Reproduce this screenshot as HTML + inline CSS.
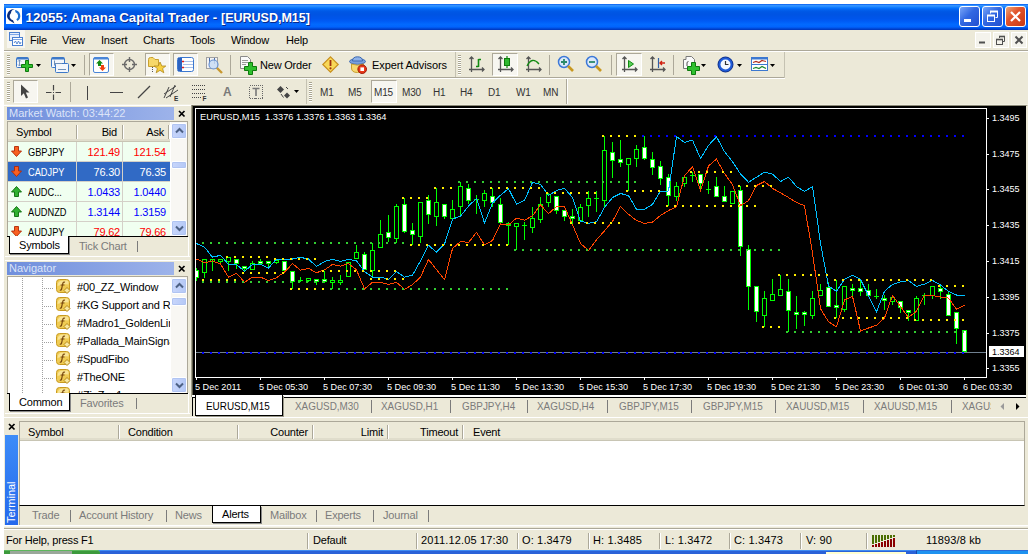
<!DOCTYPE html>
<html><head><meta charset="utf-8"><title>12055: Amana Capital Trader - [EURUSD,M15]</title>
<style>
*{box-sizing:border-box;margin:0;padding:0}
html,body{width:1032px;height:554px;overflow:hidden;background:#fff}
body{position:relative;font-family:"Liberation Sans",sans-serif;font-size:11px;color:#000;line-height:1}
.a,.t,svg{position:absolute}
.t{white-space:nowrap;line-height:13px;height:13px;font-size:11px;letter-spacing:-0.2px}
.u{display:inline-block;transform:scaleX(.84);transform-origin:0 50%;letter-spacing:0}
svg{overflow:visible}
#bg{left:4px;top:4px;width:1024px;height:546px;background:#ECE9D8}
#tb{left:4px;top:4px;width:1024px;height:26px;background:linear-gradient(#0058EE 0,#3593FF 5%,#288EFF 9%,#127DFF 13%,#036FFC 17%,#0262EE 22%,#0057E5 30%,#0054E3 40%,#0055EB 56%,#005BF5 66%,#026AFE 78%,#0164FD 88%,#0050E2 93%,#003DC6 97%,#0038BE 100%)}
#ttl{letter-spacing:0.08px;left:25.5px;top:10px;font:bold 13.3px "Liberation Sans",sans-serif;color:#fff;height:16px;line-height:16px;text-shadow:1px 1px 0 #0A2A8A}
.cb{position:absolute;top:6px;width:21px;height:21px;border:1px solid #fff;border-radius:3px;background:linear-gradient(135deg,#7AA6F8 0,#3268E2 45%,#2250D0 100%)}
.cb.x{background:linear-gradient(135deg,#ECA878 0,#E2542C 40%,#C83814 100%)}
.hl{position:absolute;height:1px}
.vl{position:absolute;width:1px}
.grip{position:absolute;width:3px;background:repeating-linear-gradient(#A9A58F 0,#A9A58F 1px,#fff 1px,#fff 2px)}
.pr{position:absolute;border:1px solid;border-color:#ACA899 #fff #fff #ACA899;background:#F7F6F0}
.g{color:#7B7B7B}
</style></head><body>
<div id="bg" class="a"></div>
<!-- title bar -->
<div id="tb" class="a"></div>
<svg style="left:6px;top:8px" width="16" height="16" viewBox="0 0 16 16"><rect width="16" height="16" fill="#fff"/><path d="M9 1.5A6.3 6.3 0 0 0 3.5 12.5L8.5 15.5L7 12.2A4.2 4.2 0 0 1 5 5A3.5 3.5 0 0 1 9 1.5Z" fill="#0A2A78"/><path d="M9 2A6 6 0 0 1 11.5 13L10.3 11.3A4 4 0 0 0 9.5 4.2Z" fill="#1E6FD0"/></svg>
<div id="ttl" class="t">12055: Amana Capital Trader - <span class="u" style="transform:scaleX(.94)">[EURUSD,M15]</span></div>
<div class="cb" style="left:959px"><div class="a" style="left:4px;top:12px;width:7px;height:3px;background:#fff"></div></div>
<div class="cb" style="left:982px"><svg style="left:0;top:0" width="19" height="19"><path d="M7.5 6.5V4.5H14.5V10.500H12.500" fill="none" stroke="#fff" stroke-width="1"/><path d="M7 4.500H15" stroke="#fff" stroke-width="2"/><rect x="4.500" y="8.500" width="7" height="6" fill="none" stroke="#fff"/><path d="M4 8.500H12" stroke="#fff" stroke-width="2"/></svg></div>
<div class="cb x" style="left:1005px"><svg style="left:0;top:0" width="19" height="19"><path d="M5 5L14 14M14 5L5 14" stroke="#fff" stroke-width="2.2"/></svg></div>
<!-- menu -->
<svg style="left:8px;top:31px" width="16" height="16" viewBox="0 0 16 16"><rect x="-1" y="-1" width="18" height="18" fill="#F7F6F0"/><rect x="1.500" y="1.500" width="10" height="8" fill="#E8F0FC" stroke="#4A7FD0"/><rect x="4.500" y="6.500" width="10" height="8" fill="#fff" stroke="#4A7FD0"/><path d="M2 3.500H11M5 8.500H14" stroke="#7FA8E8" stroke-width="1"/><path d="M6 12L7.500 10L9 13L10.500 10L12 13L13 11" fill="none" stroke="#4A7FD0" stroke-width="0.9"/></svg>
<div class="t" style="left:30px;top:34px">File</div>
<div class="t" style="left:62px;top:34px">View</div>
<div class="t" style="left:101px;top:34px">Insert</div>
<div class="t" style="left:143px;top:34px">Charts</div>
<div class="t" style="left:190px;top:34px">Tools</div>
<div class="t" style="left:231px;top:34px">Window</div>
<div class="t" style="left:286px;top:34px">Help</div>
<svg style="left:975px;top:32px" width="53" height="16"><g fill="#F4F3EC" stroke="#fff"><rect x="0.500" y="0.500" width="15" height="15"/><rect x="18.500" y="0.500" width="15" height="15"/><rect x="36.500" y="0.500" width="15" height="15"/></g><path d="M4 10.500H10" stroke="#505050" stroke-width="2"/><path d="M24.500 6V4.500H29.500V9.500H28" fill="none" stroke="#505050"/><path d="M24 4.500H30" stroke="#505050" stroke-width="1.600"/><rect x="21.500" y="7.500" width="6" height="5" fill="none" stroke="#505050"/><path d="M21 7.500H28" stroke="#505050" stroke-width="1.600"/><path d="M40.500 4.500L47.500 11.500M47.500 4.500L40.500 11.500" stroke="#505050" stroke-width="2"/></svg>
<div class="hl" style="left:4px;top:50px;width:1024px;background:#ACA899"></div>
<div class="hl" style="left:4px;top:51px;width:1024px;background:#fff"></div>
<!-- toolbar 1 -->
<div class="hl" style="left:4px;top:77px;width:781px;background:#ACA899"></div>
<div class="hl" style="left:4px;top:78px;width:781px;background:#fff"></div>
<div class="vl" style="left:455px;top:52px;height:25px;background:#C5C2B2"></div>
<div class="vl" style="left:784px;top:52px;height:26px;background:#C5C2B2"></div>
<div class="grip" style="left:7px;top:55px;height:20px"></div>
<div class="grip" style="left:458px;top:55px;height:20px"></div>
<!-- new chart -->
<svg style="left:16px;top:56px" width="18" height="18"><rect x="0.500" y="1.500" width="12" height="10" rx="1" fill="#F2F6FC" stroke="#3C78C8"/><path d="M1 2.500H12" stroke="#3C78C8" stroke-width="2"/><path d="M3.500 4V10M2 5.500L3.500 4L5 5.500M2 8.500L3.500 10L5 8.500" fill="none" stroke="#6E8FB8" stroke-width="0.9"/><path d="M9.500 4.500H12.500V8.500H16.500V11.500H12.500V15.500H9.500V11.500H5.500V8.500H9.500Z" fill="#2FC02F" stroke="#0E7A0E"/></svg>
<svg style="left:36px;top:64px" width="6" height="4"><path d="M0 0H5L2.500 3Z" fill="#000"/></svg>
<!-- profiles -->
<svg style="left:51px;top:56px" width="18" height="18"><rect x="0.500" y="1.500" width="13" height="10" rx="1" fill="#F2F6FC" stroke="#3C78C8"/><path d="M1 2.500H13" stroke="#3C78C8" stroke-width="2"/><rect x="4.500" y="7.500" width="13" height="9" rx="1" fill="#F2F6FC" stroke="#3C78C8"/><path d="M3.500 4.500V9.500M3 7.500H11" stroke="#6E8FB8" fill="none"/><path d="M7 13.500H15" stroke="#6E8FB8"/></svg>
<svg style="left:71px;top:64px" width="6" height="4"><path d="M0 0H5L2.500 3Z" fill="#000"/></svg>
<div class="vl" style="left:84px;top:55px;height:20px;background:#ACA899"></div>
<!-- market watch (pressed) -->
<div class="pr" style="left:89px;top:53px;width:25px;height:23px"></div>
<svg style="left:93px;top:57px" width="17" height="17"><rect x="0.500" y="0.500" width="15" height="15" rx="1.500" fill="#fff" stroke="#4A86D8"/><path d="M1 1.500H15" stroke="#4A86D8" stroke-width="2"/><path d="M6.500 3L3 6.500H5V9H8V6.500H10Z" fill="#128A12"/><path d="M9.500 14L6 10.500H8V8H11V10.500H13Z" fill="#F04010"/></svg>
<!-- crosshair circle -->
<svg style="left:121px;top:56px" width="17" height="17"><circle cx="8.500" cy="8.500" r="5" fill="none" stroke="#6A6A6A" stroke-width="1.400"/><path d="M8.500 1V6M8.500 11V16M1 8.500H6M11 8.500H16" stroke="#6A6A6A" stroke-width="1.400"/></svg>
<!-- navigator folder star (pressed) -->
<div class="pr" style="left:145px;top:53px;width:25px;height:23px"></div>
<svg style="left:148px;top:56px" width="19" height="18"><path d="M0.500 3.500Q0.500 1.500 2.500 1.500H5L7 3.500H10.500V10.500H0.500Z" fill="#F6D86A" stroke="#C8A030"/><path d="M4.500 11V17" stroke="#555" stroke-dasharray="1 1"/><path d="M12 6L13.800 10H17.800L14.600 12.600L15.800 16.800L12 14.300L8.200 16.800L9.400 12.600L6.200 10H10.200Z" fill="#F8D040" stroke="#B08818" stroke-width="0.800"/></svg>
<!-- terminal (pressed) -->
<div class="pr" style="left:173px;top:53px;width:25px;height:23px"></div>
<svg style="left:177px;top:57px" width="17" height="16"><rect x="0.500" y="0.500" width="16" height="14" rx="2" fill="#fff" stroke="#3C78D0"/><rect x="1" y="1" width="4" height="13" fill="#2C62C0"/><path d="M6 4.500H16M6 7.500H16M6 10.500H16" stroke="#A8C0E8"/><path d="M5 4.500H7M5 10.500H7" stroke="#E02020" stroke-width="1.400"/></svg>
<!-- strategy tester magnifier -->
<svg style="left:205px;top:56px" width="19" height="19"><rect x="1.500" y="1.500" width="11" height="11" fill="#F4F4F4" stroke="#A0A0A0"/><path d="M4.500 2V8M9.500 2V8" stroke="#4A6EA8"/><circle cx="8.500" cy="8.500" r="4.500" fill="#C8DCF4" fill-opacity="0.850" stroke="#6A92D0" stroke-width="1.200"/><path d="M12 12L17 17" stroke="#C89830" stroke-width="2.400"/></svg>
<div class="vl" style="left:230px;top:55px;height:20px;background:#ACA899"></div>
<!-- new order -->
<svg style="left:240px;top:56px" width="18" height="19"><path d="M0.500 0.500H7.500L10.500 3.500V12.500H0.500Z" fill="#FAFAFA" stroke="#8A8A8A"/><path d="M2 4.500H8M2 6.500H8M2 8.500H6" stroke="#9A9A9A"/><path d="M8.500 6.500H12.500V10.500H16.500V14.500H12.500V18.500H8.500V14.500H4.500V10.500H8.500Z" fill="#2FC02F" stroke="#0E7A0E"/></svg>
<div class="t" style="left:260px;top:59px;letter-spacing:-0.2px">New Order</div>
<!-- warning diamond -->
<svg style="left:322px;top:56px" width="17" height="17"><path d="M8.500 0.800L16.200 8.500L8.500 16.200L0.800 8.500Z" fill="#F8D858" stroke="#C89020" stroke-width="1.200"/><path d="M8.500 4V10" stroke="#A03010" stroke-width="1.800"/><circle cx="8.500" cy="12.300" r="1.100" fill="#A03010"/></svg>
<!-- expert advisors icon -->
<svg style="left:349px;top:56px" width="19" height="19"><ellipse cx="8.500" cy="5.500" rx="8" ry="2.800" fill="#7AA0DC" stroke="#3C68B0"/><path d="M3.500 5Q3.500 0.800 8.500 0.800Q13.500 0.800 13.500 5Z" fill="#8FB2E8" stroke="#3C68B0"/><path d="M2.500 8Q8.500 10.500 14.500 8V12Q14.500 16.500 8.500 16.500Q2.500 16.500 2.500 12Z" fill="#F6D870" stroke="#C8A030"/><circle cx="13.200" cy="13.200" r="4.300" fill="#E83818" stroke="#A01808"/><rect x="11.400" y="11.400" width="3.600" height="3.600" fill="#fff"/></svg>
<div class="t" style="left:372px;top:59px;letter-spacing:-0.1px">Expert Advisors</div>
<!-- toolbar 1 right segment -->
<svg style="left:468px;top:56px" width="17" height="17"><path d="M3.500 1V16M1 13.500H16M1.500 3L3.500 1L5.500 3M14 11.500L16 13.500L14 15.500" fill="none" stroke="#555" stroke-width="1.300"/><path d="M10.500 3V11M10.500 3.500H13M8 10.500H10.500" fill="none" stroke="#128A12" stroke-width="1.600"/></svg>
<div class="pr" style="left:492px;top:53px;width:26px;height:23px"></div>
<svg style="left:497px;top:56px" width="17" height="17"><path d="M3.500 1V16M1 13.500H16M1.500 3L3.500 1L5.500 3M14 11.500L16 13.500L14 15.500" fill="none" stroke="#555" stroke-width="1.300"/><path d="M10 0V12" stroke="#128A12" stroke-width="1.200"/><rect x="7.500" y="2.500" width="5" height="7" fill="#2FB82F" stroke="#0E7A0E"/></svg>
<svg style="left:525px;top:56px" width="17" height="17"><path d="M3.500 1V16M1 13.500H16M1.500 3L3.500 1L5.500 3M14 11.500L16 13.500L14 15.500" fill="none" stroke="#555" stroke-width="1.300"/><path d="M2 10Q7 0 14 8" fill="none" stroke="#128A12" stroke-width="1.300"/></svg>
<div class="vl" style="left:549px;top:55px;height:20px;background:#ACA899"></div>
<svg style="left:557px;top:55px" width="19" height="19"><circle cx="7" cy="7" r="5.500" fill="#DCE8FA" stroke="#3C78D8" stroke-width="1.500"/><path d="M4 7H10M7 4V10" stroke="#2A8A6A" stroke-width="1.800"/><path d="M11 11L16 16" stroke="#C89820" stroke-width="2.600"/></svg>
<svg style="left:585px;top:55px" width="19" height="19"><circle cx="7" cy="7" r="5.500" fill="#DCE8FA" stroke="#3C78D8" stroke-width="1.500"/><path d="M4 7H10" stroke="#2A8A6A" stroke-width="1.800"/><path d="M11 11L16 16" stroke="#C89820" stroke-width="2.600"/></svg>
<div class="vl" style="left:611px;top:55px;height:20px;background:#ACA899"></div>
<div class="pr" style="left:616px;top:53px;width:26px;height:23px"></div>
<svg style="left:621px;top:56px" width="17" height="17"><path d="M3.500 1V16M1 13.500H16M1.500 3L3.500 1L5.500 3M14 11.500L16 13.500L14 15.500" fill="none" stroke="#555" stroke-width="1.300"/><path d="M7.500 4.500V11.500L12.500 8Z" fill="#5AD05A" stroke="#128A12"/></svg>
<svg style="left:649px;top:56px" width="17" height="17"><path d="M3.500 1V16M1 13.500H16M1.500 3L3.500 1L5.500 3M14 11.500L16 13.500L14 15.500" fill="none" stroke="#555" stroke-width="1.300"/><path d="M9.500 2V12" stroke="#3060A8" stroke-width="1.200"/><path d="M16 7H11M13 5L11 7L13 9" fill="none" stroke="#D02010" stroke-width="1.400"/></svg>
<div class="vl" style="left:673px;top:55px;height:20px;background:#ACA899"></div>
<svg style="left:683px;top:56px" width="18" height="19"><path d="M0.500 3.500H3V0.500H8.500L11.500 3.500V12.500H0.500Z" fill="#FAFAFA" stroke="#7A7A7A"/><path d="M5.500 5.500Q4 5.500 4 7V10" fill="none" stroke="#555"/><path d="M8.500 6.500H12.500V10.500H16.500V14.500H12.500V18.500H8.500V14.500H4.500V10.500H8.500Z" fill="#2FC02F" stroke="#0E7A0E"/></svg>
<svg style="left:701px;top:64px" width="6" height="4"><path d="M0 0H5L2.500 3Z" fill="#000"/></svg>
<svg style="left:717px;top:56px" width="17" height="17"><circle cx="8.500" cy="8.500" r="7.500" fill="#1E5AD8" stroke="#0A2C88"/><circle cx="8.500" cy="8.500" r="5" fill="#F4F8FF"/><path d="M8.500 5V8.500H11.500" fill="none" stroke="#333" stroke-width="1.200"/></svg>
<svg style="left:737px;top:64px" width="6" height="4"><path d="M0 0H5L2.500 3Z" fill="#000"/></svg>
<svg style="left:751px;top:57px" width="18" height="15"><rect x="0.500" y="0.500" width="16" height="13" fill="#fff" stroke="#3C78D0"/><path d="M1 1.500H16" stroke="#3C78D0" stroke-width="2"/><path d="M1 7.500H16" stroke="#3C78D0"/><path d="M2 5.500L5 4.500L8 5.500L11 3.500L15 4.500" fill="none" stroke="#B03020" stroke-width="1.200"/><path d="M2 11.500L5 10.500L8 11.500L11 9.500L15 11.500" fill="none" stroke="#208A30" stroke-width="1.200"/></svg>
<svg style="left:770px;top:64px" width="6" height="4"><path d="M0 0H5L2.500 3Z" fill="#000"/></svg>
<!-- toolbar 2 -->
<div class="hl" style="left:4px;top:104px;width:1024px;background:#F1EFE2"></div>
<div class="hl" style="left:4px;top:105px;width:187px;background:#fff"></div>
<div class="vl" style="left:306px;top:79px;height:25px;background:#C5C2B2"></div>
<div class="vl" style="left:566px;top:79px;height:25px;background:#ACA899"></div>
<div class="vl" style="left:567px;top:79px;height:25px;background:#fff"></div>
<div class="grip" style="left:7px;top:82px;height:20px"></div>
<div class="grip" style="left:309px;top:82px;height:20px"></div>
<div class="pr" style="left:13px;top:80px;width:25px;height:23px"></div>
<svg style="left:20px;top:84px" width="11" height="16"><path d="M1 0.500V12L3.800 9.300L6 14.500L8 13.600L5.800 8.600H9.500Z" fill="#444"/></svg>
<svg style="left:45px;top:84px" width="17" height="17"><path d="M8.500 1V6.500M8.500 10.500V16M1 8.500H6.500M10.500 8.500H16" stroke="#444" stroke-width="1.200"/><rect x="8" y="8" width="1" height="1" fill="#444"/></svg>
<div class="vl" style="left:70px;top:82px;height:20px;background:#ACA899"></div>
<div class="vl" style="left:87px;top:86px;height:14px;background:#444"></div>
<div class="hl" style="left:110px;top:92px;width:13px;background:#444"></div>
<svg style="left:137px;top:85px" width="14" height="14"><path d="M1 13L13 1" stroke="#444" stroke-width="1.200"/></svg>
<svg style="left:163px;top:84px" width="18" height="18"><path d="M1 10L13 2M3 14L15 6M1 14L6 3M7 13L12 1" fill="none" stroke="#444" stroke-width="1"/><text x="11" y="17" font-family="Liberation Sans,sans-serif" font-size="6.500" font-weight="bold" fill="#333">E</text></svg>
<svg style="left:192px;top:84px" width="18" height="18"><path d="M0 1.500H14M0 5.500H14M0 9.500H14M0 13.500H9" stroke="#444" stroke-dasharray="1 1"/><text x="10.500" y="17" font-family="Liberation Sans,sans-serif" font-size="6.500" font-weight="bold" fill="#333">F</text></svg>
<div class="t" style="left:223px;top:86px;font-size:12px;font-weight:bold;color:#7A7A7A">A</div>
<svg style="left:249px;top:84px" width="15" height="16"><rect x="0.500" y="1.500" width="13" height="13" fill="none" stroke="#666" stroke-dasharray="1 1" shape-rendering="crispEdges"/><path d="M3.500 4.500H10.500M7 4.500V12" stroke="#777" stroke-width="1.600"/></svg>
<svg style="left:277px;top:86px" width="14" height="13"><path d="M3.500 0L7 3.500L3.500 7L0 3.500Z" fill="#444"/><path d="M10 6.500L13 9.500L10 12.500L7 9.500Z" fill="#444"/><path d="M4 8L6.500 11.500M9 1L11 3" stroke="#444"/></svg>
<svg style="left:294px;top:90px" width="6" height="4"><path d="M0 0H5L2.500 3Z" fill="#000"/></svg>
<div class="pr" style="left:371px;top:80px;width:26px;height:23px"></div>
<div class="t" style="left:320px;top:86px;font-size:10px;color:#333">M1</div>
<div class="t" style="left:348px;top:86px;font-size:10px;color:#333">M5</div>
<div class="t" style="left:374px;top:86px;font-size:10px;color:#333">M15</div>
<div class="t" style="left:402px;top:86px;font-size:10px;color:#333">M30</div>
<div class="t" style="left:433px;top:86px;font-size:10px;color:#333">H1</div>
<div class="t" style="left:460px;top:86px;font-size:10px;color:#333">H4</div>
<div class="t" style="left:488px;top:86px;font-size:10px;color:#333">D1</div>
<div class="t" style="left:516px;top:86px;font-size:10px;color:#333">W1</div>
<div class="t" style="left:543px;top:86px;font-size:10px;color:#333">MN</div>
<style>
.ptl{position:absolute;left:7px;width:167px;height:13px;background:linear-gradient(90deg,#6F8EDC,#9DB3EA)}
.ptl span{position:absolute;left:2px;top:0;line-height:13px;font-size:11px;color:#DCE4F8;white-space:nowrap}
.mwr{position:absolute;left:8px;width:162px;height:20px;background:#F0FFF0;border-bottom:1px solid #D4D0C8}
.mwr .t{top:4px}
.r{text-align:right}
.red{color:#FF0000}.blu{color:#0000FF}
.sbtn{position:absolute;width:16px;border:1px solid #fff;border-radius:2px;background:linear-gradient(90deg,#C8D6FB,#B4C8F6);box-shadow:inset 0 0 0 1px #B0C4F2}
.nv{position:absolute;left:77px;font-size:11px;letter-spacing:-0.15px;line-height:13px;white-space:nowrap}
</style>
<!-- Market Watch -->
<div class="ptl" style="top:107px"><span>Market Watch: 03:44:22</span></div>
<svg style="left:178px;top:110px" width="8" height="8"><path d="M1 1L6.500 6.500M6.500 1L1 6.500" stroke="#000" stroke-width="1.700"/></svg>
<div class="a" style="left:7px;top:121px;width:181px;height:116px;background:#fff;border:1px solid #ACA899;border-bottom:none"></div>
<div class="a" style="left:8px;top:122px;width:162px;height:20px;background:#ECE9D8;border-bottom:1px solid #C8C5B4;box-shadow:inset 0 -2px 0 #E0DDCC"></div>
<div class="vl" style="left:76px;top:125px;height:14px;background:#ACA899"></div><div class="vl" style="left:77px;top:125px;height:14px;background:#fff"></div>
<div class="vl" style="left:122px;top:125px;height:14px;background:#ACA899"></div><div class="vl" style="left:123px;top:125px;height:14px;background:#fff"></div>
<div class="vl" style="left:168px;top:125px;height:14px;background:#ACA899"></div><div class="vl" style="left:169px;top:125px;height:14px;background:#fff"></div>
<div class="t" style="left:16px;top:126px">Symbol</div>
<div class="t r" style="left:80px;width:37px;top:126px">Bid</div>
<div class="t r" style="left:126px;width:38px;top:126px">Ask</div>
<div class="mwr" style="top:142px"><div class="t" style="left:20px"><span class="u">GBPJPY</span></div><div class="t r red" style="left:70px;width:42px">121.49</div><div class="t r red" style="left:116px;width:42px">121.54</div></div>
<div class="mwr" style="top:162px;background:#316AC5;color:#fff"><div class="t" style="left:20px"><span class="u">CADJPY</span></div><div class="t r" style="left:70px;width:42px">76.30</div><div class="t r" style="left:116px;width:42px">76.35</div></div>
<div class="mwr" style="top:182px"><div class="t" style="left:20px"><span class="u">AUDC...</span></div><div class="t r blu" style="left:70px;width:42px">1.0433</div><div class="t r blu" style="left:116px;width:42px">1.0440</div></div>
<div class="mwr" style="top:202px"><div class="t" style="left:20px"><span class="u">AUDNZD</span></div><div class="t r blu" style="left:70px;width:42px">1.3144</div><div class="t r blu" style="left:116px;width:42px">1.3159</div></div>
<div class="mwr" style="top:222px;height:14px;overflow:hidden;border-bottom:none"><div class="t" style="left:20px"><span class="u">AUDJPY</span></div><div class="t r red" style="left:70px;width:42px">79.62</div><div class="t r red" style="left:116px;width:42px">79.66</div></div>
<div class="vl" style="left:76px;top:142px;height:94px;background:#D4D0C8"></div>
<div class="vl" style="left:122px;top:142px;height:94px;background:#D4D0C8"></div>
<!-- arrows -->
<svg style="left:11px;top:146px" width="12" height="12"><path d="M3.500 0.500H7.500V5H10.500L5.500 10.500L0.500 5H3.500Z" fill="#F86020" stroke="#B02808" stroke-width="0.900"/></svg>
<svg style="left:11px;top:166px" width="12" height="12"><path d="M3.500 0.500H7.500V5H10.500L5.500 10.500L0.500 5H3.500Z" fill="#F86020" stroke="#B02808" stroke-width="0.900"/></svg>
<svg style="left:11px;top:186px" width="12" height="12"><path d="M3.500 10.500H7.500V6H10.500L5.500 0.500L0.500 6H3.500Z" fill="#30B030" stroke="#0A6A0A" stroke-width="0.900"/></svg>
<svg style="left:11px;top:206px" width="12" height="12"><path d="M3.500 10.500H7.500V6H10.500L5.500 0.500L0.500 6H3.500Z" fill="#30B030" stroke="#0A6A0A" stroke-width="0.900"/></svg>
<svg style="left:11px;top:226px" width="12" height="12"><path d="M3.500 0.500H7.500V5H10.500L5.500 10.500L0.500 5H3.500Z" fill="#F86020" stroke="#B02808" stroke-width="0.900"/></svg>
<!-- scrollbar -->
<div class="a" style="left:171px;top:122px;width:16px;height:114px;background:#F8F7F3"></div>
<div class="sbtn" style="left:171px;top:123px;height:16px"></div>
<svg style="left:175px;top:127px" width="9" height="7"><path d="M1 5.500L4.500 2L8 5.500" fill="none" stroke="#4D6185" stroke-width="2"/></svg>
<div class="sbtn" style="left:171px;top:161px;height:8px"></div>
<div class="sbtn" style="left:171px;top:220px;height:16px"></div>
<svg style="left:175px;top:225px" width="9" height="7"><path d="M1 1.500L4.500 5L8 1.500" fill="none" stroke="#4D6185" stroke-width="2"/></svg>
<!-- tabs -->
<div class="hl" style="left:7px;top:236px;width:181px;background:#000"></div>
<div class="a" style="left:9px;top:236px;width:60px;height:18px;background:#fff;border:1px solid #000;border-top:none;box-shadow:1px 1px 0 #888"></div>
<div class="t" style="left:19px;top:239px">Symbols</div>
<div class="t g" style="left:79px;top:240px">Tick Chart</div>
<div class="vl" style="left:137px;top:241px;height:11px;background:#7B7B7B"></div>
<div class="hl" style="left:5px;top:256px;width:185px;background:#fff"></div>
<div class="vl" style="left:188px;top:237px;height:20px;background:#fff"></div>
<div class="hl" style="left:5px;top:260px;width:185px;background:#fff"></div>
<!-- Navigator -->
<div class="ptl" style="top:262px"><span>Navigator</span></div>
<svg style="left:178px;top:265px" width="8" height="8"><path d="M1 1L6.500 6.500M6.500 1L1 6.500" stroke="#000" stroke-width="1.700"/></svg>
<div class="a" style="left:7px;top:276px;width:181px;height:118px;background:#fff;border:1px solid #ACA899;border-bottom:none;overflow:hidden" id="nav">
<div class="vl" style="left:14px;top:0;height:117px;background:repeating-linear-gradient(#fff 0,#fff 1px,#A0A0A0 1px,#A0A0A0 2px)"></div>
<div class="vl" style="left:34px;top:0;height:117px;background:repeating-linear-gradient(#fff 0,#fff 1px,#A0A0A0 1px,#A0A0A0 2px)"></div>
</div>
<div class="hl" style="left:43px;top:288px;width:11px;background:repeating-linear-gradient(90deg,#fff 0,#fff 1px,#A0A0A0 1px,#A0A0A0 2px)"></div>
<svg style="left:56px;top:279px" width="16" height="16"><rect x="0.500" y="0.500" width="13" height="13" rx="3" fill="#F0CC54" stroke="#C89A20"/><path d="M1.500 7Q1.500 1.500 7 1.500H11Q12.500 1.500 12.500 3V5.500Q7 4.500 1.500 7Z" fill="#FAE8A0" opacity="0.850"/><path d="M9 3.300Q7.200 2.500 6.700 4.800L5.600 10Q5.200 11.600 3.800 11M4.600 6H8.500" fill="none" stroke="#7A4A10" stroke-width="1.200"/><path d="M11 8.500L14 11.500L11 14.500L8 11.500Z" fill="#F8E8A0" stroke="#B08010" stroke-width="0.900"/></svg>
<div class="nv" style="top:281px">#00_ZZ_Window</div>
<div class="hl" style="left:43px;top:306px;width:11px;background:repeating-linear-gradient(90deg,#fff 0,#fff 1px,#A0A0A0 1px,#A0A0A0 2px)"></div>
<svg style="left:56px;top:297px" width="16" height="16"><rect x="0.500" y="0.500" width="13" height="13" rx="3" fill="#F0CC54" stroke="#C89A20"/><path d="M1.500 7Q1.500 1.500 7 1.500H11Q12.500 1.500 12.500 3V5.500Q7 4.500 1.500 7Z" fill="#FAE8A0" opacity="0.850"/><path d="M9 3.300Q7.200 2.500 6.700 4.800L5.600 10Q5.200 11.600 3.800 11M4.600 6H8.500" fill="none" stroke="#7A4A10" stroke-width="1.200"/><path d="M11 8.500L14 11.500L11 14.500L8 11.500Z" fill="#F8E8A0" stroke="#B08010" stroke-width="0.900"/></svg>
<div class="nv" style="top:299px">#KG Support and R</div>
<div class="hl" style="left:43px;top:324px;width:11px;background:repeating-linear-gradient(90deg,#fff 0,#fff 1px,#A0A0A0 1px,#A0A0A0 2px)"></div>
<svg style="left:56px;top:315px" width="16" height="16"><rect x="0.500" y="0.500" width="13" height="13" rx="3" fill="#F0CC54" stroke="#C89A20"/><path d="M1.500 7Q1.500 1.500 7 1.500H11Q12.500 1.500 12.500 3V5.500Q7 4.500 1.500 7Z" fill="#FAE8A0" opacity="0.850"/><path d="M9 3.300Q7.200 2.500 6.700 4.800L5.600 10Q5.200 11.600 3.800 11M4.600 6H8.500" fill="none" stroke="#7A4A10" stroke-width="1.200"/><path d="M11 8.500L14 11.500L11 14.500L8 11.500Z" fill="#F8E8A0" stroke="#B08010" stroke-width="0.900"/></svg>
<div class="nv" style="top:317px">#Madro1_GoldenLin</div>
<div class="hl" style="left:43px;top:342px;width:11px;background:repeating-linear-gradient(90deg,#fff 0,#fff 1px,#A0A0A0 1px,#A0A0A0 2px)"></div>
<svg style="left:56px;top:333px" width="16" height="16"><rect x="0.500" y="0.500" width="13" height="13" rx="3" fill="#F0CC54" stroke="#C89A20"/><path d="M1.500 7Q1.500 1.500 7 1.500H11Q12.500 1.500 12.500 3V5.500Q7 4.500 1.500 7Z" fill="#FAE8A0" opacity="0.850"/><path d="M9 3.300Q7.200 2.500 6.700 4.800L5.600 10Q5.200 11.600 3.800 11M4.600 6H8.500" fill="none" stroke="#7A4A10" stroke-width="1.200"/><path d="M11 8.500L14 11.500L11 14.500L8 11.500Z" fill="#F8E8A0" stroke="#B08010" stroke-width="0.900"/></svg>
<div class="nv" style="top:335px">#Pallada_MainSigna</div>
<div class="hl" style="left:43px;top:360px;width:11px;background:repeating-linear-gradient(90deg,#fff 0,#fff 1px,#A0A0A0 1px,#A0A0A0 2px)"></div>
<svg style="left:56px;top:351px" width="16" height="16"><rect x="0.500" y="0.500" width="13" height="13" rx="3" fill="#F0CC54" stroke="#C89A20"/><path d="M1.500 7Q1.500 1.500 7 1.500H11Q12.500 1.500 12.500 3V5.500Q7 4.500 1.500 7Z" fill="#FAE8A0" opacity="0.850"/><path d="M9 3.300Q7.200 2.500 6.700 4.800L5.600 10Q5.200 11.600 3.800 11M4.600 6H8.500" fill="none" stroke="#7A4A10" stroke-width="1.200"/><path d="M11 8.500L14 11.500L11 14.500L8 11.500Z" fill="#F8E8A0" stroke="#B08010" stroke-width="0.900"/></svg>
<div class="nv" style="top:353px">#SpudFibo</div>
<div class="hl" style="left:43px;top:378px;width:11px;background:repeating-linear-gradient(90deg,#fff 0,#fff 1px,#A0A0A0 1px,#A0A0A0 2px)"></div>
<svg style="left:56px;top:369px" width="16" height="16"><rect x="0.500" y="0.500" width="13" height="13" rx="3" fill="#F0CC54" stroke="#C89A20"/><path d="M1.500 7Q1.500 1.500 7 1.500H11Q12.500 1.500 12.500 3V5.500Q7 4.500 1.500 7Z" fill="#FAE8A0" opacity="0.850"/><path d="M9 3.300Q7.200 2.500 6.700 4.800L5.600 10Q5.200 11.600 3.800 11M4.600 6H8.500" fill="none" stroke="#7A4A10" stroke-width="1.200"/><path d="M11 8.500L14 11.500L11 14.500L8 11.500Z" fill="#F8E8A0" stroke="#B08010" stroke-width="0.900"/></svg>
<div class="nv" style="top:371px">#TheONE</div>
<div class="hl" style="left:43px;top:396px;width:11px;background:repeating-linear-gradient(90deg,#fff 0,#fff 1px,#A0A0A0 1px,#A0A0A0 2px)"></div>
<svg style="left:56px;top:387px" width="16" height="16"><rect x="0.500" y="0.500" width="13" height="13" rx="3" fill="#F0CC54" stroke="#C89A20"/><path d="M1.500 7Q1.500 1.500 7 1.500H11Q12.500 1.500 12.500 3V5.500Q7 4.500 1.500 7Z" fill="#FAE8A0" opacity="0.850"/><path d="M9 3.300Q7.200 2.500 6.700 4.800L5.600 10Q5.200 11.600 3.800 11M4.600 6H8.500" fill="none" stroke="#7A4A10" stroke-width="1.200"/><path d="M11 8.500L14 11.500L11 14.500L8 11.500Z" fill="#F8E8A0" stroke="#B08010" stroke-width="0.900"/></svg>
<div class="nv" style="top:389px">#ZigZag1</div>
<div class="a" style="left:170px;top:277px;width:1px;height:116px;background:#fff"></div>
<div class="a" style="left:171px;top:277px;width:16px;height:117px;background:#F8F7F3"></div>
<div class="sbtn" style="left:171px;top:278px;height:16px"></div>
<svg style="left:175px;top:282px" width="9" height="7"><path d="M1 5.500L4.500 2L8 5.500" fill="none" stroke="#4D6185" stroke-width="2"/></svg>
<div class="sbtn" style="left:171px;top:297px;height:9px"></div>
<div class="sbtn" style="left:171px;top:377px;height:16px"></div>
<svg style="left:175px;top:382px" width="9" height="7"><path d="M1 1.500L4.500 5L8 1.500" fill="none" stroke="#4D6185" stroke-width="2"/></svg>
<div class="a" style="left:5px;top:393px;width:184px;height:23px;background:#ECE9D8"></div>
<div class="hl" style="left:7px;top:393px;width:181px;background:#000"></div>
<div class="a" style="left:9px;top:393px;width:61px;height:18px;background:#fff;border:1px solid #000;border-top:none;box-shadow:1px 1px 0 #888"></div>
<div class="t" style="left:19px;top:396px">Common</div>
<div class="t g" style="left:80px;top:397px">Favorites</div>
<div class="vl" style="left:136px;top:398px;height:11px;background:#7B7B7B"></div>
<div class="vl" style="left:188px;top:393px;height:20px;background:#fff"></div>
<div class="hl" style="left:5px;top:413px;width:185px;background:#fff"></div>
<!-- chart -->
<div class="vl" style="left:191px;top:105px;height:292px;background:#A09E8A"></div>
<div class="a" style="left:192px;top:105px;width:836px;height:290px;background:#000;border-left:1px solid #5A5848;border-top:1px solid #8C8A78;border-right:2px solid #ECE9D8"></div>
<svg style="left:0;top:0" width="1032" height="400" viewBox="0 0 1032 400" shape-rendering="crispEdges">
<defs><clipPath id="cc"><rect x="196" y="109" width="790" height="268"/></clipPath></defs>
<path d="M195.500 378V108.500H986.500V378M195 377.500H987" fill="none" stroke="#fff" stroke-width="1"/>
<g clip-path="url(#cc)">
<rect x="196" y="352" width="790" height="1" fill="#708090"/>
<path d="M196 268h1v13h-1zM194 270h5v8h-5zM204 259h1v19h-1zM202 259h5v14h-5zM212 259h1v12h-1zM210 259h5v3h-5zM220 259h1v6h-1zM218 259h5v3h-5zM228 257h1v14h-1zM226 257h5v5h-5zM236 259h1v10h-1zM234 259h5v5h-5zM244 266h1v6h-1zM242 266h5v3h-5zM252 261h1v9h-1zM250 263h5v7h-5zM260 259h1v4h-1zM258 261h5v3h-5zM268 262h1v5h-1zM266 261h5v3h-5zM276 260h1v4h-1zM274 260h5v3h-5zM284 261h1v10h-1zM282 261h5v10h-5zM292 271h1v18h-1zM290 271h5v11h-5zM300 277h1v5h-1zM298 280h5v1h-5zM308 278h1v4h-1zM306 278h5v3h-5zM316 279h1v6h-1zM314 279h5v3h-5zM324 271h1v12h-1zM322 279h5v3h-5zM332 277h1v12h-1zM330 280h5v3h-5zM340 275h1v10h-1zM338 280h5v3h-5zM348 262h1v15h-1zM346 262h5v15h-5zM356 245h1v14h-1zM354 252h5v7h-5zM364 252h1v18h-1zM362 254h5v16h-5zM372 243h1v34h-1zM370 250h5v21h-5zM380 220h1v28h-1zM378 234h5v14h-5zM388 215h1v27h-1zM386 232h5v6h-5zM396 204h1v39h-1zM394 206h5v33h-5zM404 198h1v35h-1zM402 204h5v28h-5zM412 223h1v22h-1zM410 230h5v5h-5zM420 202h1v41h-1zM418 202h5v35h-5zM428 195h1v29h-1zM426 200h5v15h-5zM436 188h1v38h-1zM434 202h5v15h-5zM444 204h1v15h-1zM442 204h5v13h-5zM452 200h1v20h-1zM450 209h5v10h-5zM460 182h1v33h-1zM458 186h5v21h-5zM468 184h1v20h-1zM466 188h5v13h-5zM476 195h1v19h-1zM474 199h5v1h-5zM484 190h1v17h-1zM482 193h5v8h-5zM492 188h1v19h-1zM490 196h5v7h-5zM500 198h1v27h-1zM498 204h5v19h-5zM508 222h1v23h-1zM506 223h5v3h-5zM516 223h1v27h-1zM514 223h5v4h-5zM524 222h1v18h-1zM522 225h5v1h-5zM532 207h1v26h-1zM530 218h5v10h-5zM540 197h1v26h-1zM538 204h5v16h-5zM548 193h1v14h-1zM546 194h5v9h-5zM556 196h1v18h-1zM554 196h5v15h-5zM564 210h1v11h-1zM562 210h5v7h-5zM572 209h1v15h-1zM570 216h5v3h-5zM580 204h1v17h-1zM578 207h5v14h-5zM588 191h1v26h-1zM586 198h5v8h-5zM596 191h1v21h-1zM594 198h5v1h-5zM604 136h1v71h-1zM602 150h5v51h-5zM612 142h1v36h-1zM610 152h5v9h-5zM620 140h1v27h-1zM618 159h5v4h-5zM628 158h1v33h-1zM626 158h5v7h-5zM636 145h1v22h-1zM634 149h5v10h-5zM644 136h1v24h-1zM642 147h5v12h-5zM652 152h1v23h-1zM650 159h5v9h-5zM660 161h1v24h-1zM658 166h5v13h-5zM668 174h1v32h-1zM666 177h5v19h-5zM676 182h1v19h-1zM674 186h5v11h-5zM684 177h1v10h-1zM682 177h5v7h-5zM692 172h1v10h-1zM690 175h5v1h-5zM700 174h1v18h-1zM698 174h5v10h-5zM708 181h1v13h-1zM706 189h5v1h-5zM716 177h1v20h-1zM714 186h5v11h-5zM724 186h1v16h-1zM722 196h5v6h-5zM732 191h1v13h-1zM730 191h5v13h-5zM740 186h1v70h-1zM738 190h5v57h-5zM748 245h1v65h-1zM746 249h5v38h-5zM756 286h1v36h-1zM754 286h5v26h-5zM764 291h1v36h-1zM762 298h5v18h-5zM772 279h1v22h-1zM770 294h5v7h-5zM780 275h1v21h-1zM778 289h5v7h-5zM788 279h1v53h-1zM786 291h5v20h-5zM796 296h1v33h-1zM794 312h5v3h-5zM804 311h1v15h-1zM802 312h5v3h-5zM812 291h1v28h-1zM810 298h5v18h-5zM820 284h1v12h-1zM818 290h5v6h-5zM828 282h1v25h-1zM826 287h5v20h-5zM836 280h1v38h-1zM834 305h5v3h-5zM844 286h1v26h-1zM842 286h5v24h-5zM852 284h1v12h-1zM850 288h5v3h-5zM860 281h1v15h-1zM858 288h5v4h-5zM868 284h1v12h-1zM866 290h5v6h-5zM876 289h1v10h-1zM874 296h5v1h-5zM884 295h1v15h-1zM882 298h5v3h-5zM892 296h1v9h-1zM890 297h5v5h-5zM900 301h1v12h-1zM898 301h5v7h-5zM908 310h1v11h-1zM906 310h5v3h-5zM916 296h1v25h-1zM914 298h5v23h-5zM924 293h1v12h-1zM922 295h5v1h-5zM932 286h1v13h-1zM930 286h5v10h-5zM940 286h1v13h-1zM938 288h5v4h-5zM948 291h1v25h-1zM946 294h5v22h-5zM956 312h1v32h-1zM954 312h5v17h-5zM964 330h1v22h-1zM962 330h5v22h-5z" fill="#00FF00"/>
<path d="M203 260h3v12h-3zM211 260h3v1h-3zM219 260h3v1h-3zM227 258h3v3h-3zM251 264h3v5h-3zM275 261h3v1h-3zM307 279h3v1h-3zM331 281h3v1h-3zM339 281h3v1h-3zM347 263h3v13h-3zM355 253h3v5h-3zM371 251h3v19h-3zM379 235h3v12h-3zM395 207h3v31h-3zM419 203h3v33h-3zM435 203h3v13h-3zM451 210h3v8h-3zM459 187h3v19h-3zM483 194h3v6h-3zM515 224h3v2h-3zM531 219h3v8h-3zM539 205h3v14h-3zM547 195h3v7h-3zM579 208h3v12h-3zM587 199h3v6h-3zM603 151h3v49h-3zM627 159h3v5h-3zM635 150h3v8h-3zM675 187h3v9h-3zM683 178h3v5h-3zM731 192h3v11h-3zM763 299h3v16h-3zM771 295h3v5h-3zM779 290h3v5h-3zM811 299h3v16h-3zM819 291h3v4h-3zM843 287h3v22h-3zM891 298h3v3h-3zM915 299h3v21h-3zM931 287h3v8h-3z" fill="#000"/>
<path d="M195 271h3v6h-3zM235 260h3v3h-3zM243 267h3v1h-3zM259 262h3v1h-3zM267 262h3v1h-3zM283 262h3v8h-3zM291 272h3v9h-3zM315 280h3v1h-3zM323 280h3v1h-3zM363 255h3v14h-3zM387 233h3v4h-3zM403 205h3v26h-3zM411 231h3v3h-3zM427 201h3v13h-3zM443 205h3v11h-3zM467 189h3v11h-3zM491 197h3v5h-3zM499 205h3v17h-3zM507 224h3v1h-3zM555 197h3v13h-3zM563 211h3v5h-3zM571 217h3v1h-3zM611 153h3v7h-3zM619 160h3v2h-3zM643 148h3v10h-3zM651 160h3v7h-3zM659 167h3v11h-3zM667 178h3v17h-3zM699 175h3v8h-3zM715 187h3v9h-3zM723 197h3v4h-3zM739 191h3v55h-3zM747 250h3v36h-3zM755 287h3v24h-3zM787 292h3v18h-3zM795 313h3v1h-3zM803 313h3v1h-3zM827 288h3v18h-3zM835 306h3v1h-3zM851 289h3v1h-3zM859 289h3v2h-3zM867 291h3v4h-3zM883 299h3v1h-3zM899 302h3v5h-3zM907 311h3v1h-3zM939 289h3v2h-3zM947 295h3v20h-3zM955 313h3v15h-3zM963 331h3v20h-3z" fill="#fff"/>
<polyline points="196.5,259.0 204.5,262.8 212.5,260.9 220.5,264.0 228.5,277.1 236.5,273.1 244.5,282.3 252.5,277.1 260.5,277.1 268.5,280.6 276.5,277.7 284.5,272.1 292.5,263.6 300.5,270.2 308.5,268.4 316.5,272.7 324.5,269.9 332.5,264.4 340.5,266.1 348.5,263.6 356.5,269.9 364.5,288.9 372.5,282.3 380.5,282.3 388.5,284.3 396.5,282.3 404.5,289.3 412.5,284.6 420.5,277.1 428.5,259.4 436.5,269.6 444.5,279.6 452.5,248.6 460.5,241.4 468.5,242.6 476.5,232.4 484.5,244.8 492.5,240.5 500.5,223.9 508.5,224.9 516.5,218.1 524.5,220.2 532.5,215.8 540.5,204.9 548.5,213.6 556.5,206.7 564.5,206.7 572.5,224.8 580.5,243.5 588.5,250.4 596.5,239.8 604.5,230.8 612.5,221.4 620.5,206.4 628.5,214.3 636.5,220.5 644.5,223.4 652.5,222.1 660.5,215.5 668.5,210.5 676.5,206.8 684.5,175.9 692.5,166.6 700.5,190.3 708.5,166.0 716.5,159.1 724.5,173.5 732.5,184.7 740.5,205.6 748.5,200.6 756.5,185.5 764.5,181.5 772.5,188.4 780.5,192.8 788.5,197.5 796.5,202.5 804.5,205.6 812.5,253.0 820.5,308.6 828.5,321.8 836.5,326.8 844.5,300.0 852.5,296.2 860.5,331.0 868.5,328.0 876.5,325.3 884.5,318.0 892.5,295.4 900.5,306.6 908.5,317.4 916.5,311.2 924.5,295.4 932.5,295.6 940.5,296.9 948.5,298.1 956.5,309.3 964.5,305.2" fill="none" stroke="#FF4500" stroke-width="1" shape-rendering="crispEdges"/>
<polyline points="196.5,243.5 204.5,247.2 212.5,257.2 220.5,255.3 228.5,264.4 236.5,264.4 244.5,271.5 252.5,264.4 260.5,264.4 268.5,268.1 276.5,259.0 284.5,259.0 292.5,259.0 300.5,257.4 308.5,259.0 316.5,266.5 324.5,261.5 332.5,259.4 340.5,261.5 348.5,259.4 356.5,260.9 364.5,271.5 372.5,277.1 380.5,277.1 388.5,279.3 396.5,271.5 404.5,277.1 412.5,275.2 420.5,260.9 428.5,245.3 436.5,252.2 444.5,244.1 452.5,219.2 460.5,216.1 468.5,206.1 476.5,198.4 484.5,222.9 492.5,203.0 500.5,195.2 508.5,188.7 516.5,204.2 524.5,200.5 532.5,182.5 540.5,184.3 548.5,195.5 556.5,190.5 564.5,188.4 572.5,197.4 580.5,221.1 588.5,223.4 596.5,221.7 604.5,207.4 612.5,197.5 620.5,193.5 628.5,195.6 636.5,209.3 644.5,209.3 652.5,204.3 660.5,191.2 668.5,191.0 676.5,136.7 684.5,142.3 692.5,140.2 700.5,158.5 708.5,145.4 716.5,136.7 724.5,151.7 732.5,161.6 740.5,174.1 748.5,182.2 756.5,177.2 764.5,172.2 772.5,174.1 780.5,181.5 788.5,177.2 796.5,186.5 804.5,191.5 812.5,186.5 820.5,243.0 828.5,286.1 836.5,291.3 844.5,279.4 852.5,275.1 860.5,279.4 868.5,295.6 876.5,311.8 884.5,291.3 892.5,284.4 900.5,281.9 908.5,280.7 916.5,286.3 924.5,284.2 932.5,280.4 940.5,285.0 948.5,291.3 956.5,295.0 964.5,296.0" fill="none" stroke="#00BFFF" stroke-width="1" shape-rendering="crispEdges"/>
<path d="M202 242h2v2h-2zM210 242h2v2h-2zM218 242h2v2h-2zM226 242h2v2h-2zM234 242h2v2h-2zM242 242h2v2h-2zM250 242h2v2h-2zM258 242h2v2h-2zM266 242h2v2h-2zM274 242h2v2h-2zM282 242h2v2h-2zM290 242h2v2h-2zM298 242h2v2h-2zM306 242h2v2h-2zM314 242h2v2h-2zM322 242h2v2h-2zM330 242h2v2h-2zM338 242h2v2h-2zM346 242h2v2h-2zM354 242h2v2h-2zM362 242h2v2h-2zM370 242h2v2h-2zM378 242h2v2h-2zM386 242h2v2h-2zM394 242h2v2h-2zM402 242h2v2h-2zM202 281h2v2h-2zM210 281h2v2h-2zM218 281h2v2h-2zM226 281h2v2h-2zM234 281h2v2h-2zM242 281h2v2h-2zM250 281h2v2h-2zM258 281h2v2h-2zM266 281h2v2h-2zM274 281h2v2h-2zM282 281h2v2h-2zM290 281h2v2h-2zM298 281h2v2h-2zM306 281h2v2h-2zM314 281h2v2h-2zM322 281h2v2h-2zM330 288h2v2h-2zM338 288h2v2h-2zM346 288h2v2h-2zM354 288h2v2h-2zM362 288h2v2h-2zM370 288h2v2h-2zM378 288h2v2h-2zM386 288h2v2h-2zM394 288h2v2h-2zM402 288h2v2h-2zM410 288h2v2h-2zM418 288h2v2h-2zM426 288h2v2h-2zM434 288h2v2h-2zM442 288h2v2h-2zM450 288h2v2h-2zM458 288h2v2h-2zM466 288h2v2h-2zM474 288h2v2h-2zM482 288h2v2h-2zM490 288h2v2h-2zM498 288h2v2h-2zM506 288h2v2h-2zM458 181h2v2h-2zM466 181h2v2h-2zM474 181h2v2h-2zM482 181h2v2h-2zM490 181h2v2h-2zM498 181h2v2h-2zM506 181h2v2h-2zM514 181h2v2h-2zM522 181h2v2h-2zM530 181h2v2h-2zM538 181h2v2h-2zM546 181h2v2h-2zM554 181h2v2h-2zM562 181h2v2h-2zM570 181h2v2h-2zM578 181h2v2h-2zM586 181h2v2h-2zM594 181h2v2h-2zM602 181h2v2h-2zM610 181h2v2h-2zM618 181h2v2h-2zM626 181h2v2h-2zM634 181h2v2h-2zM514 249h2v2h-2zM522 249h2v2h-2zM530 249h2v2h-2zM538 249h2v2h-2zM546 249h2v2h-2zM554 249h2v2h-2zM562 249h2v2h-2zM570 249h2v2h-2zM578 249h2v2h-2zM586 249h2v2h-2zM594 249h2v2h-2zM602 249h2v2h-2zM610 249h2v2h-2zM618 249h2v2h-2zM626 249h2v2h-2zM634 249h2v2h-2zM642 249h2v2h-2zM650 249h2v2h-2zM658 249h2v2h-2zM666 249h2v2h-2zM674 249h2v2h-2zM682 249h2v2h-2zM690 249h2v2h-2zM698 249h2v2h-2zM706 249h2v2h-2zM714 249h2v2h-2zM722 249h2v2h-2zM730 249h2v2h-2zM738 249h2v2h-2zM746 249h2v2h-2zM754 249h2v2h-2zM762 249h2v2h-2zM770 249h2v2h-2zM778 249h2v2h-2zM786 331h2v2h-2zM794 331h2v2h-2zM802 331h2v2h-2zM810 331h2v2h-2zM818 331h2v2h-2zM826 331h2v2h-2zM834 331h2v2h-2zM842 331h2v2h-2zM850 331h2v2h-2zM858 331h2v2h-2zM866 331h2v2h-2zM874 331h2v2h-2zM882 331h2v2h-2zM890 331h2v2h-2zM898 331h2v2h-2zM906 331h2v2h-2zM914 331h2v2h-2zM922 331h2v2h-2zM930 331h2v2h-2zM938 331h2v2h-2zM946 331h2v2h-2zM954 331h2v2h-2zM962 331h2v2h-2z" fill="#32CD32"/>
<path d="M226 256h2v2h-2zM234 256h2v2h-2zM242 256h2v2h-2zM250 256h2v2h-2zM258 256h2v2h-2zM266 256h2v2h-2zM274 258h2v2h-2zM282 258h2v2h-2zM290 258h2v2h-2zM298 258h2v2h-2zM306 258h2v2h-2zM314 258h2v2h-2zM242 272h2v2h-2zM250 272h2v2h-2zM258 272h2v2h-2zM266 272h2v2h-2zM274 272h2v2h-2zM282 272h2v2h-2zM202 279h2v2h-2zM210 279h2v2h-2zM218 279h2v2h-2zM226 279h2v2h-2zM234 279h2v2h-2zM290 288h2v2h-2zM298 288h2v2h-2zM306 288h2v2h-2zM314 288h2v2h-2zM322 288h2v2h-2zM322 270h2v2h-2zM330 270h2v2h-2zM338 270h2v2h-2zM346 270h2v2h-2zM354 270h2v2h-2zM362 270h2v2h-2zM370 270h2v2h-2zM378 270h2v2h-2zM386 270h2v2h-2zM394 270h2v2h-2zM370 278h2v2h-2zM378 278h2v2h-2zM386 278h2v2h-2zM394 278h2v2h-2zM402 278h2v2h-2zM410 244h2v2h-2zM418 244h2v2h-2zM426 244h2v2h-2zM434 244h2v2h-2zM442 244h2v2h-2zM450 244h2v2h-2zM458 244h2v2h-2zM466 244h2v2h-2zM474 244h2v2h-2zM482 244h2v2h-2zM490 244h2v2h-2zM498 244h2v2h-2zM506 244h2v2h-2zM402 197h2v2h-2zM410 197h2v2h-2zM418 197h2v2h-2zM426 197h2v2h-2zM434 187h2v2h-2zM442 187h2v2h-2zM450 187h2v2h-2zM490 187h2v2h-2zM498 187h2v2h-2zM506 187h2v2h-2zM514 187h2v2h-2zM522 187h2v2h-2zM530 187h2v2h-2zM538 187h2v2h-2zM546 192h2v2h-2zM554 192h2v2h-2zM562 192h2v2h-2zM570 192h2v2h-2zM578 192h2v2h-2zM586 192h2v2h-2zM594 192h2v2h-2zM570 222h2v2h-2zM578 222h2v2h-2zM586 222h2v2h-2zM594 222h2v2h-2zM602 222h2v2h-2zM610 222h2v2h-2zM618 222h2v2h-2zM602 135h2v2h-2zM610 135h2v2h-2zM618 135h2v2h-2zM626 135h2v2h-2zM634 135h2v2h-2zM626 190h2v2h-2zM634 190h2v2h-2zM642 190h2v2h-2zM650 190h2v2h-2zM658 190h2v2h-2zM666 205h2v2h-2zM674 205h2v2h-2zM682 205h2v2h-2zM690 205h2v2h-2zM698 205h2v2h-2zM706 205h2v2h-2zM714 205h2v2h-2zM722 205h2v2h-2zM730 205h2v2h-2zM738 205h2v2h-2zM746 205h2v2h-2zM754 205h2v2h-2zM690 171h2v2h-2zM698 171h2v2h-2zM706 171h2v2h-2zM714 171h2v2h-2zM722 171h2v2h-2zM730 171h2v2h-2zM738 185h2v2h-2zM746 185h2v2h-2zM754 185h2v2h-2zM762 185h2v2h-2zM770 185h2v2h-2zM778 274h2v2h-2zM786 274h2v2h-2zM794 274h2v2h-2zM802 274h2v2h-2zM810 274h2v2h-2zM818 274h2v2h-2zM826 274h2v2h-2zM834 279h2v2h-2zM842 279h2v2h-2zM850 279h2v2h-2zM858 279h2v2h-2zM866 279h2v2h-2zM874 279h2v2h-2zM882 279h2v2h-2zM890 279h2v2h-2zM898 279h2v2h-2zM906 279h2v2h-2zM914 279h2v2h-2zM922 279h2v2h-2zM930 279h2v2h-2zM938 285h2v2h-2zM946 285h2v2h-2zM954 285h2v2h-2zM962 285h2v2h-2zM762 326h2v2h-2zM770 326h2v2h-2zM778 326h2v2h-2zM834 317h2v2h-2zM842 317h2v2h-2zM850 317h2v2h-2zM858 317h2v2h-2zM866 317h2v2h-2zM874 317h2v2h-2zM882 317h2v2h-2zM890 317h2v2h-2zM898 317h2v2h-2zM906 317h2v2h-2zM914 319h2v2h-2zM922 319h2v2h-2zM930 319h2v2h-2zM938 319h2v2h-2zM946 319h2v2h-2zM954 319h2v2h-2zM962 319h2v2h-2z" fill="#FFEE00"/>
<path d="M642 135h2v2h-2zM650 135h2v2h-2zM658 135h2v2h-2zM666 135h2v2h-2zM674 135h2v2h-2zM682 135h2v2h-2zM690 135h2v2h-2zM698 135h2v2h-2zM706 135h2v2h-2zM714 135h2v2h-2zM722 135h2v2h-2zM730 135h2v2h-2zM738 135h2v2h-2zM746 135h2v2h-2zM754 135h2v2h-2zM762 135h2v2h-2zM770 135h2v2h-2zM778 135h2v2h-2zM786 135h2v2h-2zM794 135h2v2h-2zM802 135h2v2h-2zM810 135h2v2h-2zM818 135h2v2h-2zM826 135h2v2h-2zM834 135h2v2h-2zM842 135h2v2h-2zM850 135h2v2h-2zM858 135h2v2h-2zM866 135h2v2h-2zM874 135h2v2h-2zM882 135h2v2h-2zM890 135h2v2h-2zM898 135h2v2h-2zM906 135h2v2h-2zM914 135h2v2h-2zM922 135h2v2h-2zM930 135h2v2h-2zM938 135h2v2h-2zM946 135h2v2h-2zM954 135h2v2h-2zM962 135h2v2h-2zM194 352h2v2h-2zM202 352h2v2h-2zM210 352h2v2h-2zM218 352h2v2h-2zM226 352h2v2h-2zM234 352h2v2h-2zM242 352h2v2h-2zM250 352h2v2h-2zM258 352h2v2h-2zM266 352h2v2h-2zM274 352h2v2h-2zM282 352h2v2h-2zM290 352h2v2h-2zM298 352h2v2h-2zM306 352h2v2h-2zM314 352h2v2h-2zM322 352h2v2h-2zM330 352h2v2h-2zM338 352h2v2h-2zM346 352h2v2h-2zM354 352h2v2h-2zM362 352h2v2h-2zM370 352h2v2h-2zM378 352h2v2h-2zM386 352h2v2h-2zM394 352h2v2h-2zM402 352h2v2h-2zM410 352h2v2h-2zM418 352h2v2h-2zM426 352h2v2h-2zM434 352h2v2h-2zM442 352h2v2h-2zM450 352h2v2h-2zM458 352h2v2h-2zM466 352h2v2h-2zM474 352h2v2h-2zM482 352h2v2h-2zM490 352h2v2h-2zM498 352h2v2h-2zM506 352h2v2h-2zM514 352h2v2h-2zM522 352h2v2h-2zM530 352h2v2h-2zM538 352h2v2h-2zM546 352h2v2h-2zM554 352h2v2h-2zM562 352h2v2h-2zM570 352h2v2h-2zM578 352h2v2h-2zM586 352h2v2h-2zM594 352h2v2h-2zM602 352h2v2h-2zM610 352h2v2h-2zM618 352h2v2h-2zM626 352h2v2h-2zM634 352h2v2h-2zM642 352h2v2h-2zM650 352h2v2h-2zM658 352h2v2h-2zM666 352h2v2h-2zM674 352h2v2h-2zM682 352h2v2h-2zM690 352h2v2h-2zM698 352h2v2h-2zM706 352h2v2h-2zM714 352h2v2h-2zM722 352h2v2h-2zM730 352h2v2h-2zM738 352h2v2h-2zM746 352h2v2h-2zM754 352h2v2h-2zM762 352h2v2h-2zM770 352h2v2h-2zM778 352h2v2h-2zM786 352h2v2h-2zM794 352h2v2h-2zM802 352h2v2h-2zM810 352h2v2h-2zM818 352h2v2h-2zM826 352h2v2h-2zM834 352h2v2h-2zM842 352h2v2h-2zM850 352h2v2h-2zM858 352h2v2h-2zM866 352h2v2h-2zM874 352h2v2h-2zM882 352h2v2h-2zM890 352h2v2h-2zM898 352h2v2h-2zM906 352h2v2h-2zM914 352h2v2h-2zM922 352h2v2h-2zM930 352h2v2h-2zM938 352h2v2h-2zM946 352h2v2h-2zM954 352h2v2h-2zM962 352h2v2h-2z" fill="#0000FF"/>
</g>
<path d="M987 118h2v1h-2zM987 154h2v1h-2zM987 189h2v1h-2zM987 225h2v1h-2zM987 261h2v1h-2zM987 297h2v1h-2zM987 333h2v1h-2zM987 368h2v1h-2z" fill="#fff"/>
<path d="M196 378h1v2h-1zM260 378h1v2h-1zM324 378h1v2h-1zM388 378h1v2h-1zM452 378h1v2h-1zM516 378h1v2h-1zM580 378h1v2h-1zM644 378h1v2h-1zM708 378h1v2h-1zM772 378h1v2h-1zM836 378h1v2h-1zM900 378h1v2h-1zM964 378h1v2h-1z" fill="#fff"/>
<rect x="989" y="346" width="35" height="11" fill="#fff"/>
<g font-family="Liberation Sans, sans-serif" font-size="9.5" fill="#fff" shape-rendering="auto" lengthAdjust="spacingAndGlyphs">
<text x="992" y="121" textLength="27.5" lengthAdjust="spacingAndGlyphs">1.3495</text>
<text x="992" y="157" textLength="27.5" lengthAdjust="spacingAndGlyphs">1.3475</text>
<text x="992" y="192" textLength="27.5" lengthAdjust="spacingAndGlyphs">1.3455</text>
<text x="992" y="228" textLength="27.5" lengthAdjust="spacingAndGlyphs">1.3435</text>
<text x="992" y="264" textLength="27.5" lengthAdjust="spacingAndGlyphs">1.3415</text>
<text x="992" y="300" textLength="27.5" lengthAdjust="spacingAndGlyphs">1.3395</text>
<text x="992" y="336" textLength="27.5" lengthAdjust="spacingAndGlyphs">1.3375</text>
<text x="992" y="371" textLength="27.5" lengthAdjust="spacingAndGlyphs">1.3355</text>
<text x="992" y="355" fill="#000" textLength="27.5" lengthAdjust="spacingAndGlyphs">1.3364</text>
<text x="195" y="390" textLength="46" lengthAdjust="spacingAndGlyphs">5 Dec 2011</text>
<text x="259" y="390" textLength="49" lengthAdjust="spacingAndGlyphs">5 Dec 05:30</text>
<text x="323" y="390" textLength="49" lengthAdjust="spacingAndGlyphs">5 Dec 07:30</text>
<text x="387" y="390" textLength="49" lengthAdjust="spacingAndGlyphs">5 Dec 09:30</text>
<text x="451" y="390" textLength="49" lengthAdjust="spacingAndGlyphs">5 Dec 11:30</text>
<text x="515" y="390" textLength="49" lengthAdjust="spacingAndGlyphs">5 Dec 13:30</text>
<text x="579" y="390" textLength="49" lengthAdjust="spacingAndGlyphs">5 Dec 15:30</text>
<text x="643" y="390" textLength="49" lengthAdjust="spacingAndGlyphs">5 Dec 17:30</text>
<text x="707" y="390" textLength="49" lengthAdjust="spacingAndGlyphs">5 Dec 19:30</text>
<text x="771" y="390" textLength="49" lengthAdjust="spacingAndGlyphs">5 Dec 21:30</text>
<text x="835" y="390" textLength="49" lengthAdjust="spacingAndGlyphs">5 Dec 23:30</text>
<text x="899" y="390" textLength="49" lengthAdjust="spacingAndGlyphs">6 Dec 01:30</text>
<text x="963" y="390" textLength="49" lengthAdjust="spacingAndGlyphs">6 Dec 03:30</text>
<text x="200" y="120" textLength="186.5" lengthAdjust="spacingAndGlyphs">EURUSD,M15&#160;&#160;1.3376 1.3376 1.3363 1.3364</text>
</g></svg>
<!-- chart tabs -->
<div class="a" style="left:192px;top:395px;width:836px;height:22px;background:#ECE9D8"></div>
<div class="a" style="left:192px;top:395px;width:834px;height:2px;background:#fff"></div>
<div class="hl" style="left:283px;top:397px;width:743px;background:#000"></div>
<div class="hl" style="left:192px;top:397px;width:4px;background:#000"></div>
<div class="vl" style="left:192px;top:397px;height:19px;background:#000"></div>
<div class="a" style="left:195px;top:395px;width:88px;height:21px;background:#fff;border:1px solid #000;border-top:none;box-shadow:1px 1px 0 #9A9888"></div>

<div class="t" style="left:206px;top:400px"><span class="u" style="transform:scaleX(.9)">EURUSD,M15</span></div>
<div class="t g ct" style="left:295px;top:400px;width:65px"><span class="u" style="transform:scaleX(.9)">XAGUSD,M30</span></div>
<div class="t g ct" style="left:381px;top:400px;width:58px"><span class="u" style="transform:scaleX(.9)">XAGUSD,H1</span></div>
<div class="t g ct" style="left:462px;top:400px;width:54px"><span class="u" style="transform:scaleX(.9)">GBPJPY,H4</span></div>
<div class="t g ct" style="left:537px;top:400px;width:58px"><span class="u" style="transform:scaleX(.9)">XAGUSD,H4</span></div>
<div class="t g ct" style="left:619px;top:400px;width:62px"><span class="u" style="transform:scaleX(.9)">GBPJPY,M15</span></div>
<div class="t g ct" style="left:703px;top:400px;width:61px"><span class="u" style="transform:scaleX(.9)">GBPJPY,M15</span></div>
<div class="t g ct" style="left:786px;top:400px;width:66px"><span class="u" style="transform:scaleX(.9)">XAUUSD,M15</span></div>
<div class="t g ct" style="left:874px;top:400px;width:66px"><span class="u" style="transform:scaleX(.9)">XAUUSD,M15</span></div>
<div class="t g" style="left:962px;top:400px;width:29px;overflow:hidden"><span class="u" style="transform:scaleX(.9)">XAGUSD,M15</span></div>
<div class="vl" style="left:371px;top:400px;height:13px;background:#7B7B7B"></div>
<div class="vl" style="left:450px;top:400px;height:13px;background:#7B7B7B"></div>
<div class="vl" style="left:527px;top:400px;height:13px;background:#7B7B7B"></div>
<div class="vl" style="left:607px;top:400px;height:13px;background:#7B7B7B"></div>
<div class="vl" style="left:691px;top:400px;height:13px;background:#7B7B7B"></div>
<div class="vl" style="left:775px;top:400px;height:13px;background:#7B7B7B"></div>
<div class="vl" style="left:863px;top:400px;height:13px;background:#7B7B7B"></div>
<div class="vl" style="left:951px;top:400px;height:13px;background:#7B7B7B"></div>
<svg style="left:999px;top:402px" width="24" height="10"><path d="M5 1V8L1.500 4.500Z" fill="#9A9A9A"/><path d="M17 1V8L20.500 4.500Z" fill="#000"/></svg>
<div class="hl" style="left:4px;top:417px;width:1024px;background:#fff"></div>
<div class="hl" style="left:4px;top:418px;width:1024px;background:#ECE9D8"></div>
<!-- terminal -->
<svg style="left:8px;top:423px" width="8" height="8"><path d="M1 1L6.500 6.500M6.500 1L1 6.500" stroke="#000" stroke-width="1.700"/></svg>
<div class="a" style="left:5px;top:435px;width:13px;height:91px;background:linear-gradient(#3D8CF8,#2468EC)"></div>
<div class="t" style="left:5px;top:526px;width:60px;height:13px;line-height:13px;color:#fff;transform-origin:0 0;transform:rotate(-90deg);padding-left:3px;letter-spacing:0">Terminal</div>
<div class="a" style="left:19px;top:421px;width:1006px;height:85px;background:#fff;border:1px solid #ACA899;border-bottom:1px solid #000"></div>
<div class="a" style="left:20px;top:422px;width:1004px;height:19px;background:#ECE9D8;border-bottom:1px solid #C8C5B4;box-shadow:inset 0 -2px 0 #E0DDCC"></div>
<div class="vl" style="left:118px;top:425px;height:14px;background:#ACA899"></div><div class="vl" style="left:119px;top:425px;height:14px;background:#fff"></div>
<div class="vl" style="left:237px;top:425px;height:14px;background:#ACA899"></div><div class="vl" style="left:238px;top:425px;height:14px;background:#fff"></div>
<div class="vl" style="left:312px;top:425px;height:14px;background:#ACA899"></div><div class="vl" style="left:313px;top:425px;height:14px;background:#fff"></div>
<div class="vl" style="left:387px;top:425px;height:14px;background:#ACA899"></div><div class="vl" style="left:388px;top:425px;height:14px;background:#fff"></div>
<div class="vl" style="left:462px;top:425px;height:14px;background:#ACA899"></div><div class="vl" style="left:463px;top:425px;height:14px;background:#fff"></div>
<div class="t" style="left:28px;top:426px">Symbol</div>
<div class="t" style="left:128px;top:426px">Condition</div>
<div class="t r" style="left:248px;width:60px;top:426px">Counter</div>
<div class="t r" style="left:323px;width:60px;top:426px">Limit</div>
<div class="t r" style="left:398px;width:60px;top:426px">Timeout</div>
<div class="t" style="left:473px;top:426px">Event</div>
<div class="a" style="left:212px;top:506px;width:49px;height:17px;background:#fff;border:1px solid #000;border-top:none;box-shadow:1px 1px 0 #888"></div>
<div class="t" style="left:222px;top:508px">Alerts</div>
<div class="t g" style="left:32px;top:509px">Trade</div>
<div class="t g" style="left:79px;top:509px">Account History</div>
<div class="t g" style="left:175px;top:509px">News</div>
<div class="t g" style="left:270px;top:509px">Mailbox</div>
<div class="t g" style="left:325px;top:509px">Experts</div>
<div class="t g" style="left:383px;top:509px">Journal</div>
<div class="vl" style="left:70px;top:510px;height:12px;background:#7B7B7B"></div>
<div class="vl" style="left:166px;top:510px;height:12px;background:#7B7B7B"></div>
<div class="vl" style="left:316px;top:510px;height:12px;background:#7B7B7B"></div>
<div class="vl" style="left:373px;top:510px;height:12px;background:#7B7B7B"></div>
<div class="vl" style="left:428px;top:510px;height:12px;background:#7B7B7B"></div>
<div class="vl" style="left:19px;top:506px;height:20px;background:#ACA899"></div>
<!-- status -->
<div class="hl" style="left:4px;top:525px;width:1024px;background:#fff"></div>
<div class="hl" style="left:4px;top:526px;width:1024px;background:#F6F4EC"></div>
<div class="hl" style="left:4px;top:528px;width:1024px;background:#ACA899"></div>
<div class="hl" style="left:4px;top:529px;width:1024px;background:#fff"></div>
<div class="vl" style="left:307px;top:533px;height:16px;background:#ACA899"></div><div class="vl" style="left:308px;top:533px;height:16px;background:#fff"></div>
<div class="vl" style="left:416px;top:533px;height:16px;background:#ACA899"></div><div class="vl" style="left:417px;top:533px;height:16px;background:#fff"></div>
<div class="vl" style="left:517px;top:533px;height:16px;background:#ACA899"></div><div class="vl" style="left:518px;top:533px;height:16px;background:#fff"></div>
<div class="vl" style="left:588px;top:533px;height:16px;background:#ACA899"></div><div class="vl" style="left:589px;top:533px;height:16px;background:#fff"></div>
<div class="vl" style="left:659px;top:533px;height:16px;background:#ACA899"></div><div class="vl" style="left:660px;top:533px;height:16px;background:#fff"></div>
<div class="vl" style="left:729px;top:533px;height:16px;background:#ACA899"></div><div class="vl" style="left:730px;top:533px;height:16px;background:#fff"></div>
<div class="vl" style="left:866px;top:533px;height:16px;background:#ACA899"></div><div class="vl" style="left:867px;top:533px;height:16px;background:#fff"></div>
<div class="vl" style="left:800px;top:533px;height:16px;background:#ACA899"></div><div class="vl" style="left:801px;top:533px;height:16px;background:#fff"></div>
<div class="t" style="left:6px;top:534px">For Help, press F1</div>
<div class="t" style="left:313px;top:534px">Default</div>
<div class="t" style="left:421px;top:534px;letter-spacing:0.15px">2011.12.05 17:30</div>
<div class="t" style="left:522px;top:534px;letter-spacing:0.15px">O: 1.3479</div>
<div class="t" style="left:593px;top:534px;letter-spacing:0.15px">H: 1.3485</div>
<div class="t" style="left:665px;top:534px;letter-spacing:0.15px">L: 1.3472</div>
<div class="t" style="left:734px;top:534px;letter-spacing:0.15px">C: 1.3473</div>
<div class="t" style="left:806px;top:534px;letter-spacing:0.15px">V: 90</div>
<div class="t" style="left:926px;top:534px;letter-spacing:0.15px">11893/8 kb</div>
<svg style="left:872px;top:535px" width="24" height="12" shape-rendering="crispEdges"><rect x="0" y="0" width="2" height="9" fill="#4B6E00"/><rect x="0" y="10" width="2" height="2" fill="#8B0000"/><rect x="3" y="0" width="2" height="8" fill="#4B6E00"/><rect x="3" y="9" width="2" height="3" fill="#8B0000"/><rect x="6" y="0" width="2" height="7" fill="#4B6E00"/><rect x="6" y="8" width="2" height="4" fill="#8B0000"/><rect x="9" y="0" width="2" height="6" fill="#4B6E00"/><rect x="9" y="7" width="2" height="5" fill="#8B0000"/><rect x="12" y="0" width="2" height="5" fill="#4B6E00"/><rect x="12" y="6" width="2" height="6" fill="#8B0000"/><rect x="15" y="0" width="2" height="4" fill="#4B6E00"/><rect x="15" y="5" width="2" height="7" fill="#8B0000"/><rect x="18" y="0" width="2" height="3" fill="#4B6E00"/><rect x="18" y="4" width="2" height="8" fill="#8B0000"/><rect x="21" y="0" width="2" height="2" fill="#4B6E00"/><rect x="21" y="3" width="2" height="9" fill="#8B0000"/></svg>
<div class="a" style="left:4px;top:550px;width:1024px;height:4px;background:#2A62D8;border-top:1px solid #3F8CF3"></div>
<div class="a" style="left:4px;top:550px;width:96px;height:4px;background:#3C9A3C;border-top:1px solid #5CB85C;border-radius:0 3px 0 0"></div>
<div class="a" style="left:10px;top:551px;width:62px;height:3px;background:#9AA89A"></div>
<div class="a" style="left:826px;top:552px;width:80px;height:2px;background:#FFFFD0"></div>
<div class="a" style="left:916px;top:550px;width:112px;height:4px;background:#1E92F0;border-top:1px solid #2A6CD8;border-left:1px solid #1848A8"></div>
</body></html>
